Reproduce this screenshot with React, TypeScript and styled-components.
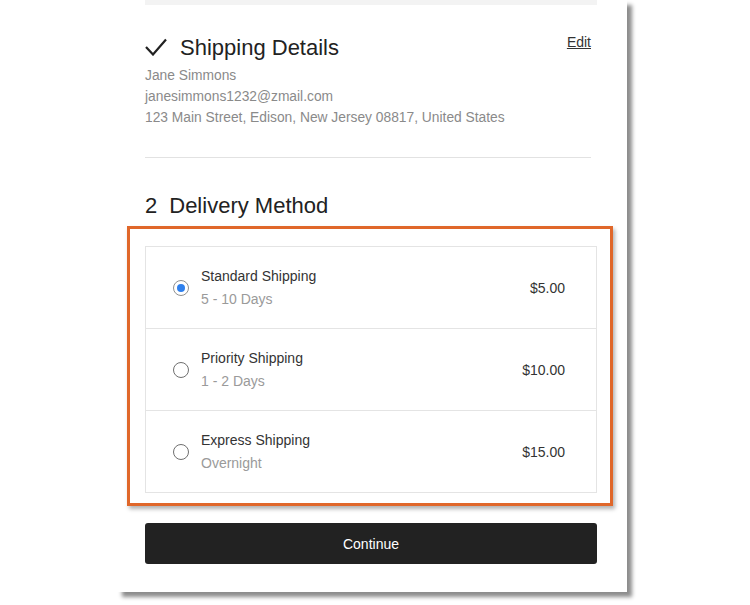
import React, { useState } from "react";
import styled, { createGlobalStyle } from "styled-components";

const GlobalStyle = createGlobalStyle`
  html, body {
    margin: 0;
    padding: 0;
    background: #ffffff;
  }
  body {
    font-family: "Liberation Sans", Arial, sans-serif;
    color: #333333;
  }
`;

interface DeliveryOption {
  id: string;
  name: string;
  eta: string;
  price: string;
}

const options: DeliveryOption[] = [
  { id: "standard", name: "Standard Shipping", eta: "5 - 10 Days", price: "$5.00" },
  { id: "priority", name: "Priority Shipping", eta: "1 - 2 Days", price: "$10.00" },
  { id: "express", name: "Express Shipping", eta: "Overnight", price: "$15.00" },
];

function CheckIcon() {
  return (
    <svg width="22" height="18" viewBox="0 0 22 18" fill="none">
      <polyline points="1,9 8,16.5 21,1.5" stroke="#222" strokeWidth="2.2" strokeLinejoin="miter" />
    </svg>
  );
}

export default function App() {
  const [selected, setSelected] = useState("standard");

  return (
    <>
      <GlobalStyle />
      <Page>
        <Card>
          <PrevSection />

          <Section>
            <SectionHeader>
              <HeaderTitle>
                <CheckIcon />
                <Heading>Shipping Details</Heading>
              </HeaderTitle>
              <EditLink href="#">Edit</EditLink>
            </SectionHeader>
            <Details>
              <DetailLine>Jane Simmons</DetailLine>
              <DetailLine>janesimmons1232@zmail.com</DetailLine>
              <DetailLine>123 Main Street, Edison, New Jersey 08817, United States</DetailLine>
            </Details>
            <Divider />
          </Section>

          <StepHeading>
            <StepNumber>2</StepNumber>Delivery Method
          </StepHeading>

          <Highlight>
            <OptionList>
              {options.map((opt) => (
                <OptionRow key={opt.id} onClick={() => setSelected(opt.id)}>
                  <Radio $checked={selected === opt.id} />
                  <OptionText>
                    <OptionName>{opt.name}</OptionName>
                    <OptionEta>{opt.eta}</OptionEta>
                  </OptionText>
                  <Price>{opt.price}</Price>
                </OptionRow>
              ))}
            </OptionList>
          </Highlight>

          <ContinueButton type="button">Continue</ContinueButton>
        </Card>
      </Page>
    </>
  );
}

const Page = styled.div`
  width: 750px;
  height: 605px;
  overflow: hidden;
`;

const Card = styled.div`
  width: 452px;
  margin-left: 117px;
  padding: 0 30px 28px 28px;
  background: #ffffff;
  box-shadow: 5px 5px 4px rgba(0, 0, 0, 0.45);
  display: flex;
  flex-direction: column;
`;

const PrevSection = styled.div`
  height: 5px;
  background: #f3f3f3;
`;

const Section = styled.section`
  width: 446px;
  padding-top: 30px;
`;

const SectionHeader = styled.div`
  display: flex;
  justify-content: space-between;
  align-items: flex-start;
`;

const HeaderTitle = styled.div`
  display: flex;
  align-items: center;
  gap: 13px;

  svg {
    margin-top: -3px;
  }
`;

const Heading = styled.h1`
  margin: 0;
  font-size: 22px;
  line-height: 26px;
  font-weight: normal;
  color: #222222;
`;

const StepHeading = styled.h2`
  margin: 35px 0 0;
  font-size: 22px;
  line-height: 26px;
  font-weight: normal;
  color: #222222;
`;

const StepNumber = styled.span`
  margin-right: 12px;
`;

const EditLink = styled.a`
  font-size: 14px;
  line-height: 20px;
  margin-top: -3px;
  color: #333333;
  text-decoration: underline;
`;

const Details = styled.div`
  margin-top: 4px;
  display: flex;
  flex-direction: column;
`;

const DetailLine = styled.div`
  font-size: 13.8px;
  line-height: 21px;
  color: #8a8a8a;
`;

const Divider = styled.hr`
  margin: 29px 0 0;
  border: none;
  border-top: 1px solid #e2e2e2;
`;

const Highlight = styled.div`
  margin: 7px -16px 0 -18px;
  padding: 17px 13px 10px 15px;
  border: 3px solid #e0672a;
  box-shadow: 2px 3px 4px rgba(0, 0, 0, 0.3);
`;

const OptionList = styled.div`
  border: 1px solid #e4e4e4;
  display: flex;
  flex-direction: column;
`;

const OptionRow = styled.label`
  height: 80px;
  display: flex;
  align-items: center;
  padding: 1px 31px 0 27px;
  cursor: pointer;

  & + & {
    border-top: 1px solid #e4e4e4;
  }
`;

const Radio = styled.span<{ $checked: boolean }>`
  width: 14px;
  height: 14px;
  border-radius: 50%;
  border: 1px solid ${(p) => (p.$checked ? "#8f8f8f" : "#6f6f6f")};
  flex-shrink: 0;
  display: flex;
  align-items: center;
  justify-content: center;
  margin-top: -1px;

  &::after {
    content: "";
    width: 8px;
    height: 8px;
    border-radius: 50%;
    background: #2f80ed;
    display: ${(p) => (p.$checked ? "block" : "none")};
  }
`;

const OptionText = styled.div`
  margin-left: 12px;
  flex: 1;
  display: flex;
  flex-direction: column;
`;

const OptionName = styled.div`
  font-size: 14px;
  line-height: 23px;
  color: #333333;
`;

const OptionEta = styled.div`
  font-size: 14px;
  line-height: 23px;
  color: #9a9a9a;
`;

const Price = styled.div`
  font-size: 14px;
  color: #333333;
`;

const ContinueButton = styled.button`
  margin-top: 17px;
  height: 41px;
  width: 100%;
  border: none;
  border-radius: 3px;
  background: #222222;
  color: #ffffff;
  font-family: "Liberation Sans", Arial, sans-serif;
  font-size: 14px;
  cursor: pointer;
`;
